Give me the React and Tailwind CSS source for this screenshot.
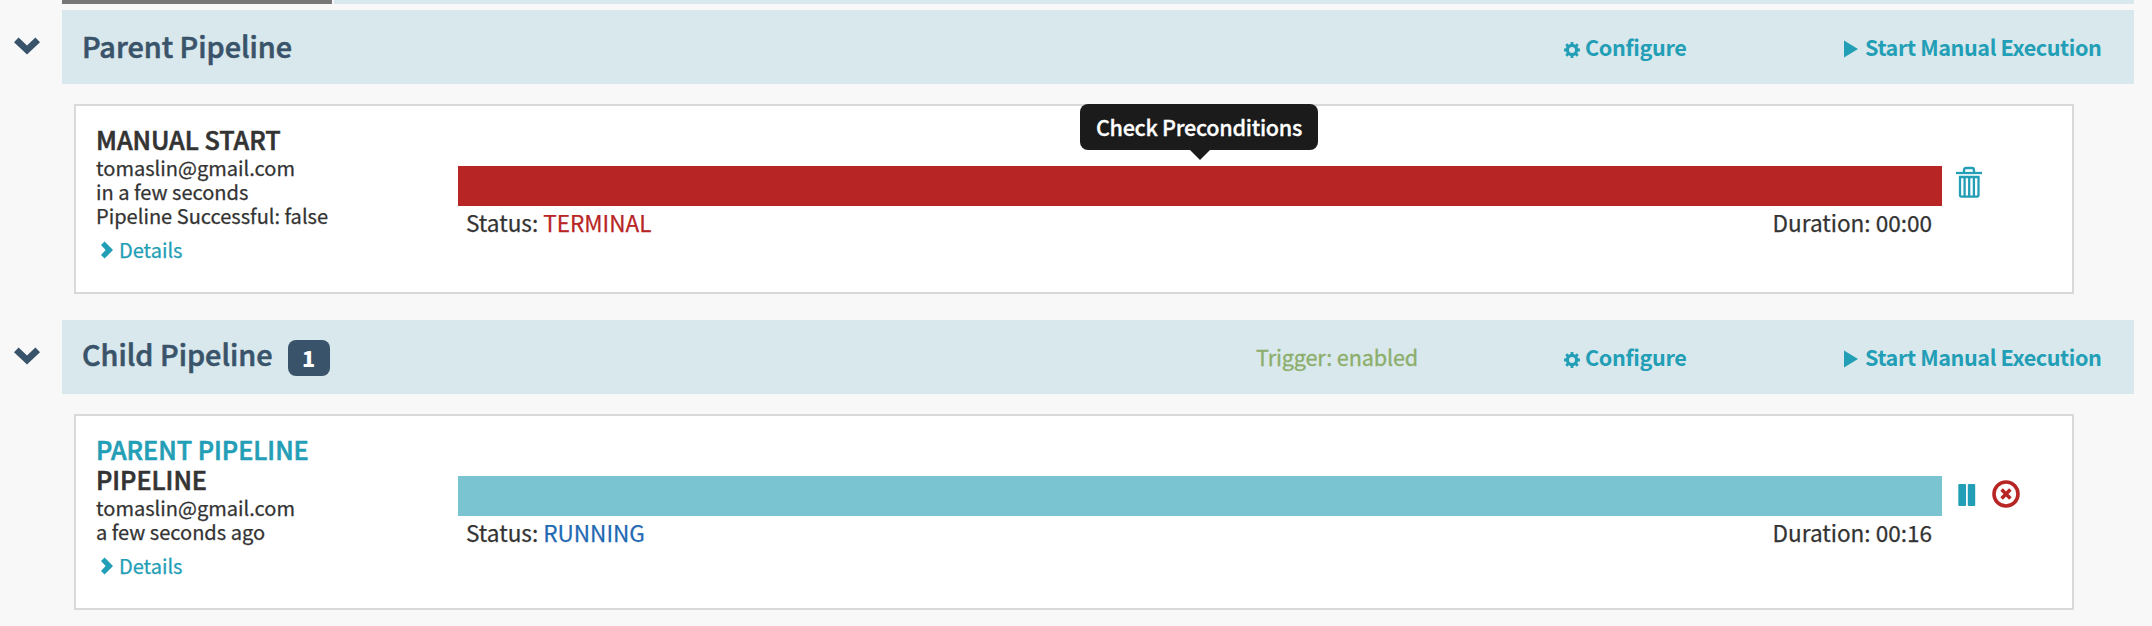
import React from "react";

const TEAL = "text-[#229eb6]";
const SEMIBOLD = "font-medium [-webkit-text-stroke:0.6px]";

function Chevron({ className }) {
  return (
    <svg viewBox="0 0 26 18" className={className} fill="currentColor">
      <path d="M0 5.2 4.6.4 13 8.4 21.4.4 26 5.2 13 17.6Z" />
    </svg>
  );
}

function ChevronRight({ className }) {
  return (
    <svg viewBox="0 0 12 18" className={className} fill="currentColor">
      <path d="M0 4 3.6.4 12 9 3.600 17.6 0 14 4.600 9Z" />
    </svg>
  );
}

function Gear({ className }) {
  return (
    <svg viewBox="0 0 16 16" className={className} fill="none" stroke="currentColor">
      <circle cx="8" cy="8" r="4.6" strokeWidth="3.2" />
      <path
        strokeWidth="2.8"
        d="M8 0v3M8 13v3M0 8h3M13 8h3M2.2 2.2l2 2M11.8 11.8l2 2M2.2 13.8l2-2M11.8 4.2l2-2"
      />
    </svg>
  );
}

function Trash({ className }) {
  return (
    <svg viewBox="0 0 26 32" className={className} fill="none" stroke="currentColor" strokeWidth="2.3">
      <path d="M0 7h26" />
      <path d="M8 7V4q0-2 2-2h6q2 0 2 2v3" />
      <path d="M4 11h18.5v18q0 1.6-1.6 1.6H5.6Q4 30.6 4 29Z" />
      <path d="M8.6 11v20M13.2 11v20M17.9 11v20" />
    </svg>
  );
}

function Header({ title, badge, trigger }) {
  return (
    <div className="flex h-[74px]">
      <div className="w-[62px] shrink-0 pl-3.5 pt-[27px]">
        <Chevron className="h-[18px] w-[26px] text-[#39546a]" />
      </div>
      <div className="flex w-[2072px] bg-[#d9e8ec] text-[21.6px] leading-[32px]">
        <div className="flex w-[1194px] items-start pl-5">
          <h4
            className={
              "text-[28.8px] leading-[40px] text-[#39546a] " +
              SEMIBOLD +
              (badge ? " mt-[14px]" : " mt-[16px]")
            }
          >
            {title}
          </h4>
          {badge && (
            <span className="ml-[15px] mt-5 h-9 w-[42px] rounded-lg bg-[#39546a] text-center text-[21.6px] font-black leading-[35px] text-white">
              {badge}
            </span>
          )}
        </div>
        <div className="w-[308px] pt-[21px] tracking-[-0.13px] text-[#8cae6b] [-webkit-text-stroke:0.3px]">
          {trigger}
        </div>
        <a className={"flex w-[280px] pt-[21px] font-bold tracking-[-0.32px] " + TEAL}>
          <Gear className="mr-[5px] mt-[11px] h-4 w-4" />
          <span>Configure</span>
        </a>
        <a className={"flex pt-[21px] font-bold tracking-[-0.4px] " + TEAL}>
          <svg viewBox="0 0 14 18" className="mr-[7px] mt-[9px] h-[18px] w-3.5" fill="currentColor">
            <path d="M0 .5 14 9 0 17.5Z" />
          </svg>
          <span>Start Manual Execution</span>
        </a>
      </div>
    </div>
  );
}

function Details() {
  return (
    <a className={"mt-2.5 flex pl-[5px] text-[20px] leading-6 " + TEAL}>
      <ChevronRight className="mr-[6px] mt-[3px] h-[18px] w-3" />
      <span>Details</span>
    </a>
  );
}

function Execution({ height, info, bar, tooltip, status, statusColor, duration, actions }) {
  return (
    <div className={"ml-[74px] mt-5 flex w-[2000px] border-2 border-[#d9d9d9] bg-white text-[#333] " + height}>
      <div className="w-[382px] pl-5 pt-[17px] text-[20.05px] leading-6 [-webkit-text-stroke:0.25px]">
        {info}
        <Details />
      </div>
      <div className="w-[1484px] pt-[60px]">
        <div className={"relative h-10 " + bar}>
          {tooltip && (
            <div className="absolute -top-[62px] left-[622px] h-[46px] w-[238px] rounded-lg bg-[#1b1b1b] text-center text-[21.6px] font-medium leading-[45px] tracking-[-0.3px] text-white [-webkit-text-stroke:0.3px]">
              {tooltip}
              <svg viewBox="0 0 20 10" className="absolute left-[110px] top-[46px] h-2.5 w-5" fill="#1b1b1b">
                <path d="M0 0h20L10 10Z" />
              </svg>
            </div>
          )}
        </div>
        <div className="flex justify-between pl-2 pr-2.5 text-[22.55px] leading-8 [-webkit-text-stroke:0.25px]">
          <span>
            Status: <span className={statusColor}>{status}</span>
          </span>
          <span>{duration}</span>
        </div>
      </div>
      <div className="flex pt-[60px]">{actions}</div>
    </div>
  );
}

export default function App() {
  return (
    <div className="h-[626px] w-[2152px] overflow-hidden bg-[#f8f8f8] font-['Noto_Sans_CJK_SC','Noto_Sans',sans-serif]">
      <div className="mb-1.5 flex h-1 gap-0.5 pl-[62px]">
        <div className="w-[270px] bg-[#777]" />
        <div className="w-[1800px] bg-[#d9e8ec]" />
      </div>
      <Header title="Parent Pipeline" />
      <Execution
        height="h-[190px]"
        info={
          <>
            <div className={"h-[33px] text-[25.2px] leading-[32px] " + SEMIBOLD}>MANUAL START</div>
            <div>tomaslin@gmail.com</div>
            <div>in a few seconds</div>
            <div>Pipeline Successful: false</div>
          </>
        }
        bar="bg-[#b82525]"
        tooltip="Check Preconditions"
        status="TERMINAL"
        statusColor="text-[#b82525]"
        duration="Duration: 00:00"
        actions={<Trash className={"ml-3.5 h-8 w-[26px] " + TEAL} />}
      />
      <div className="h-[26px]" />
      <Header title="Child Pipeline" badge="1" trigger="Trigger: enabled" />
      <Execution
        height="h-[196px]"
        info={
          <>
            <div className={"h-[30px] text-[25.2px] leading-[32px] " + SEMIBOLD + " " + TEAL}>PARENT PIPELINE</div>
            <div className={"h-[33px] text-[25.2px] leading-[32px] " + SEMIBOLD}>PIPELINE</div>
            <div>tomaslin@gmail.com</div>
            <div>a few seconds ago</div>
          </>
        }
        bar="bg-[#7ac3d0]"
        status="RUNNING"
        statusColor="text-[#1f69b3]"
        duration="Duration: 00:16"
        actions={
          <>
            <svg viewBox="0 0 18 22" className={"ml-4 mt-2 h-[22px] w-[18px] " + TEAL} fill="currentColor">
              <rect x="0.3" width="7.7" height="22" rx="1" />
              <rect x="9.8" width="7.4" height="22" rx="1" />
            </svg>
            <svg viewBox="0 0 28 28" className="ml-4 mt-1 h-7 w-7 text-[#b82525]" fill="none" stroke="currentColor">
              <circle cx="14" cy="14" r="12" strokeWidth="3.6" />
              <path d="m9.6 9.6 8.8 8.8m0-8.8-8.8 8.8" strokeWidth="3.6" />
            </svg>
          </>
        }
      />
    </div>
  );
}
